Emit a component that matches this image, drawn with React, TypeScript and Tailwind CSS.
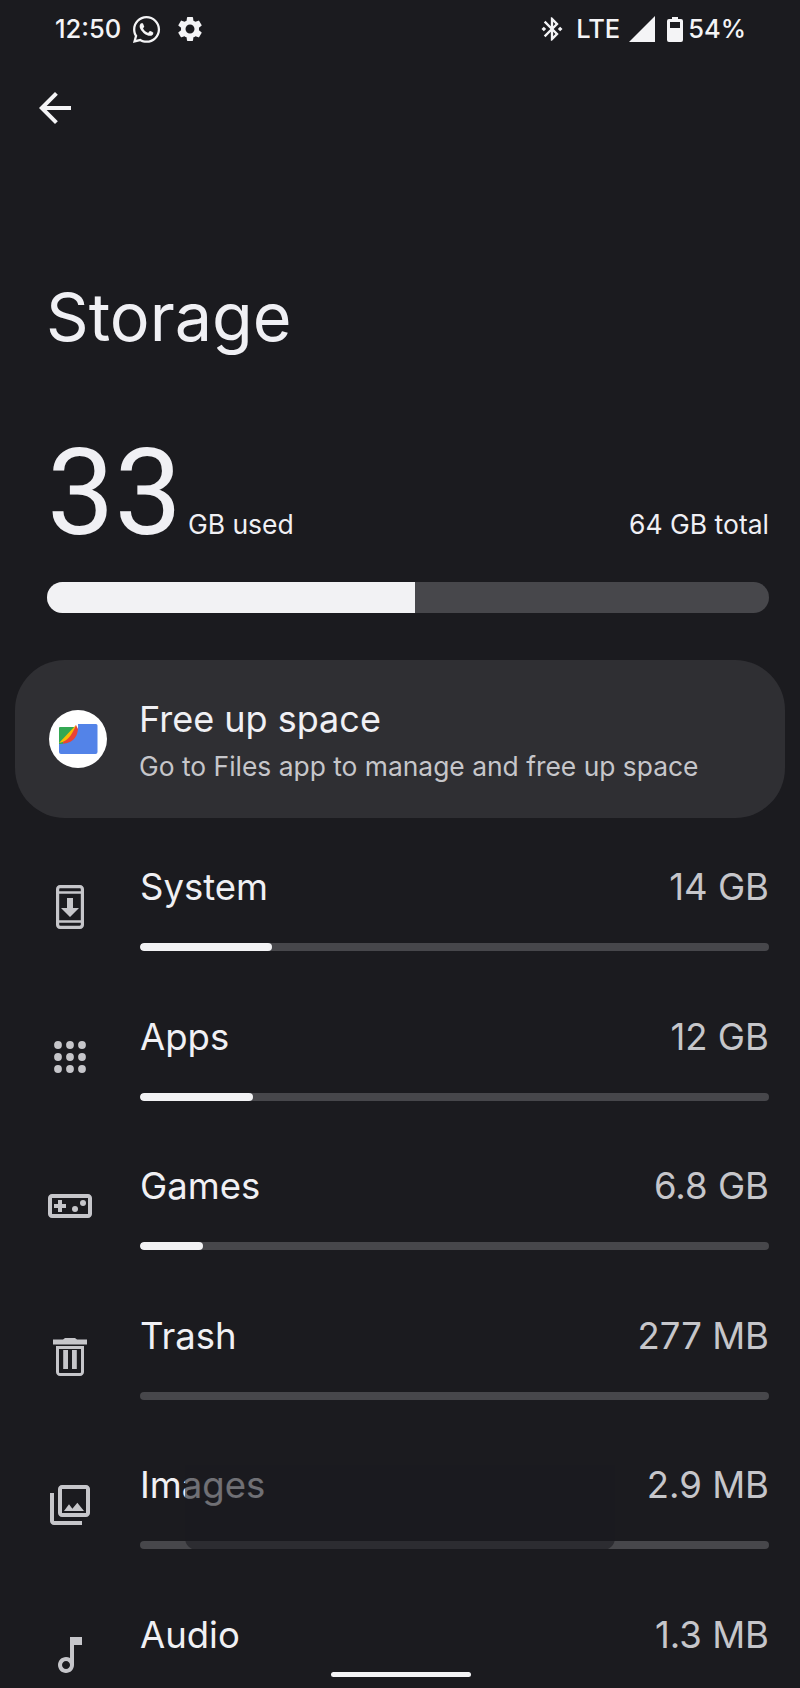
import { FaWhatsapp } from "react-icons/fa";
import { MdBluetoothConnected, MdSettings } from "react-icons/md";
import type { ReactNode } from "react";

type TStorageRow = {
  name: string;
  size: string;
  fillClass: string;
  icon: ReactNode;
};

const rows: TStorageRow[] = [
  {
    name: "System",
    size: "14 GB",
    fillClass: "w-[132px]",
    icon: (
      <path
        fillRule="evenodd"
        d="M7 1h10c1.1 0 2 .9 2 2v18c0 1.1-.9 2-2 2H7c-1.1 0-2-.9-2-2V3c0-1.1.9-2 2-2zM7.2 2.6c-.4 0-.6.2-.6.6v.9h10.8v-.9c0-.4-.2-.6-.6-.6zM6.6 5.4v13.2h10.8V5.4zM6.6 19.9v.9c0 .4.2.6.6.6h9.6c.4 0 .6-.2.6-.6v-.9zM16.5 12.5h-3V7.5h-3v5h-3l4.5 4.5z"
      />
    ),
  },
  {
    name: "Apps",
    size: "12 GB",
    fillClass: "w-[113px]",
    icon: (
      <>
        {[6, 12, 18].map((cy) =>
          [6, 12, 18].map((cx) => <circle key={`${cx}-${cy}`} cx={cx} cy={cy} r="1.95" />),
        )}
      </>
    ),
  },
  {
    name: "Games",
    size: "6.8 GB",
    fillClass: "w-[63px]",
    icon: (
      <>
        <path d="M21 6H3c-1.1 0-2 .9-2 2v8c0 1.1.9 2 2 2h18c1.1 0 2-.9 2-2V8c0-1.1-.9-2-2-2zm0 10H3V8h18v8zM6 15h2v-2h2v-2H8V9H6v2H4v2h2z" />
        <circle cx="14.5" cy="13.5" r="1.5" />
        <circle cx="18.5" cy="10.5" r="1.5" />
      </>
    ),
  },
  {
    name: "Trash",
    size: "277 MB",
    fillClass: "w-0",
    icon: (
      <path
        fillRule="evenodd"
        d="M9.5 3h5l1 .8h5v2.4h-17V3.8h5zM5 7h14v13c0 1.1-.9 2-2 2H7c-1.1 0-2-.9-2-2zM6.5 8.5V20c0 .3.2.5.5.5h10c.3 0 .5-.2.5-.5V8.5zM8.6 9h2.4v9.5H8.6zM13 9h2.4v9.5H13z"
      />
    ),
  },
  {
    name: "Images",
    size: "2.9 MB",
    fillClass: "w-0",
    icon: (
      <path d="M20 4v12H8V4h12m0-2H8c-1.1 0-2 .9-2 2v12c0 1.1.9 2 2 2h12c1.1 0 2-.9 2-2V4c0-1.1-.9-2-2-2zm-8.5 9.67 1.69 2.26 2.48-3.1L19 15H9zM2 6v14c0 1.1.9 2 2 2h14v-2H4V6H2z" />
    ),
  },
  {
    name: "Audio",
    size: "1.3 MB",
    fillClass: "w-0",
    icon: (
      <path d="M12 3l.01 10.55c-.59-.34-1.27-.55-2-.55C7.79 13 6 14.79 6 17s1.79 4 4 4 4-1.79 4-4V7h4V3h-6zm-1.99 16c-1.1 0-2-.9-2-2s.9-2 2-2 2 .9 2 2-.9 2-2 2z" />
    ),
  },
];

const StatusBar = () => (
  <div className="flex h-[58px] items-center justify-between pl-[55px] pr-[54px] text-[25.5px] font-medium text-[#f4f4f6]">
    <div className="flex items-center">
      <span>12:50</span>
      <FaWhatsapp className="ml-[10px] text-[31px]" />
      <MdSettings className="ml-[13px] text-[30px]" />
    </div>
    <div className="flex items-center">
      <MdBluetoothConnected className="text-[28px]" />
      <span className="ml-[10px]">LTE</span>
      <svg viewBox="0 0 26 26" className="ml-[9px] h-[26px] w-[26px] fill-current">
        <polygon points="26,0 26,26 0,26" />
      </svg>
      <svg viewBox="0 0 16 25" className="ml-[12px] h-[25px] w-[16px]">
        <path
          d="M5 0h6v2h3a2 2 0 0 1 2 2v19a2 2 0 0 1-2 2H2a2 2 0 0 1-2-2V4a2 2 0 0 1 2-2h3z"
          fill="#f4f4f6"
        />
        <rect x="3" y="5" width="10" height="6" fill="#1b1b1f" />
      </svg>
      <span className="ml-[5px]">54%</span>
    </div>
  </div>
);

const FilesLogo = () => (
  <div className="flex h-[58px] w-[58px] shrink-0 items-center justify-center rounded-full bg-white">
    <svg viewBox="0 0 40 32" className="h-[32px] w-[40px]">
      <path d="M1 5a1 1 0 0 1 1-1h17v17H1z" fill="#34a853" />
      <path d="M1 20 18 2l-2 14z" fill="#fbbc04" />
      <path d="M5 19c6-3 10-9 13-17l3 6c0 7-6 12-16 13z" fill="#ea4335" />
      <path
        d="M20 1h18a1.5 1.5 0 0 1 1.5 1.5V29a2 2 0 0 1-2 2H3a2 2 0 0 1-2-2v-8c11 0 20-4 19-20z"
        fill="#5383e8"
      />
    </svg>
  </div>
);

const StorageListRow = ({ name, size, fillClass, icon }: TStorageRow) => (
  <div className="flex h-[149.6px] pl-[46px] pr-[31px]">
    <div className="flex w-[94px] shrink-0 items-start pt-[20px]">
      <svg viewBox="0 0 24 24" className="h-[48px] w-[48px] fill-[#c6c6ca]">
        {icon}
      </svg>
    </div>
    <div className="min-w-0 flex-1">
      <div className="flex h-[50px] items-start justify-between pt-[2px] text-[36.5px] leading-[44px]">
        <span className="text-[#f0f0f4]">{name}</span>
        <span className="text-[#c6c6ca]">{size}</span>
      </div>
      <div className="mt-[30px] h-[8px] overflow-hidden rounded-full bg-[#47474b]">
        <div className={`h-full rounded-full bg-[#f2f2f4] ${fillClass}`} />
      </div>
    </div>
  </div>
);

const App = () => {
  return (
    <div className="relative h-[1688px] overflow-hidden bg-[#1b1b1f] font-['Inter',sans-serif]">
      <StatusBar />

      <div className="pl-[31px] pt-[26px]">
        <svg viewBox="0 0 24 24" className="h-[48px] w-[48px] fill-[#f4f4f6]">
          <path d="M20 11H7.83l5.59-5.59L12 4l-8 8 8 8 1.41-1.41L7.83 13H20v-2z" />
        </svg>
      </div>

      <h1 className="pl-[46px] pt-[145px] text-[66.5px] leading-[80px] text-[#f0f0f4]">Storage</h1>

      <div className="flex items-baseline justify-between pl-[47px] pr-[31px] pt-[61px] text-[#f0f0f4]">
        <div className="flex items-baseline">
          <span className="font-['Roboto',sans-serif] text-[120px] leading-[150px]">33</span>
          <span className="ml-[6px] text-[26.5px]">GB used</span>
        </div>
        <span className="text-[26.5px]">64 GB total</span>
      </div>

      <div className="mx-[47px] mr-[31px] mt-[14px] h-[31px] overflow-hidden rounded-full bg-[#47474b]">
        <div className="h-full w-[368px] bg-[#f2f2f4]" />
      </div>

      <div className="mx-[15px] mt-[47px] flex h-[158px] items-center rounded-[50px] bg-[#2f2f33] pl-[34px]">
        <FilesLogo />
        <div className="ml-[32px] pt-[2px]">
          <div className="text-[36px] leading-[44px] text-[#f0f0f4]">Free up space</div>
          <div className="mt-[8px] text-[26.4px] leading-[34px] text-[#c6c6ca]">
            Go to Files app to manage and free up space
          </div>
        </div>
      </div>

      <div className="mt-[45px]">
        {rows.map((row) => (
          <StorageListRow key={row.name} {...row} />
        ))}
      </div>

      {/* toast that is fading out over the list */}
      <div className="absolute bottom-[138px] left-[185px] h-[85px] w-[430px] rounded-b-[12px] bg-[#1b1b1f]/60" />

      {/* gesture handle */}
      <div className="absolute bottom-[11px] left-[331px] h-[5px] w-[140px] rounded-full bg-[#f4f4f6]" />
    </div>
  );
};

export default App;
